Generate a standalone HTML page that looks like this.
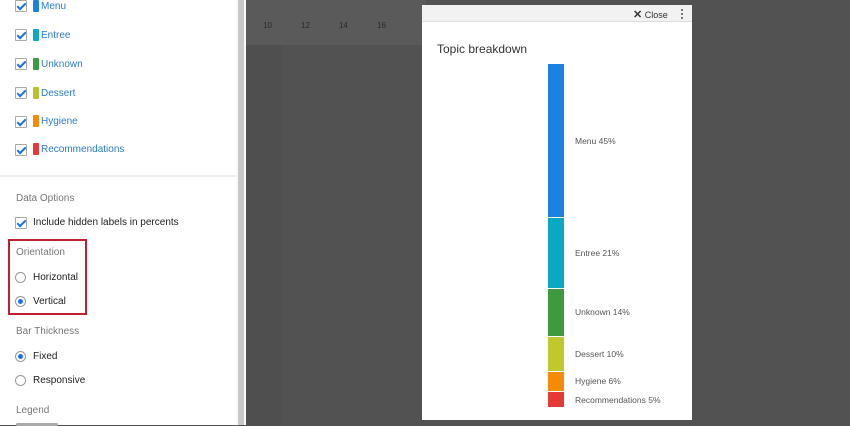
<!DOCTYPE html>
<html><head><style>
*{margin:0;padding:0;box-sizing:border-box}
body{width:850px;height:425px;overflow:hidden;position:relative;font-family:"Liberation Sans",sans-serif;background:#525252}
.panel{position:absolute;left:0;top:0;width:236px;height:425px;background:#fff}
.sb{position:absolute;left:236px;top:0;width:10px;height:425px;background:#fafafa}
.sb i{position:absolute;left:2px;top:0;width:6px;height:425px;background:#c8c8c8}
.t{position:absolute;font-size:10px;color:#222}
.lab{position:absolute;font-size:10px;color:#2a7bd0}
.cb{position:absolute;width:12px;height:12px;border:1px solid #aaa;background:#fff;border-radius:1px}
.cb:after{content:"";position:absolute;left:3px;top:0px;width:3px;height:7px;border:solid #1a73e8;border-width:0 2px 2px 0;transform:rotate(45deg)}
.sw{position:absolute;width:6px;height:12px;border-radius:1px}
.h{position:absolute;font-size:10px;color:#777}
.rd{position:absolute;width:11px;height:11px;border:1px solid #999;border-radius:50%;background:#fff}
.rd.on:after{content:"";position:absolute;left:2px;top:2px;width:5px;height:5px;border-radius:50%;background:#1a73e8}
.modal{position:absolute;left:422px;top:5px;width:270px;height:415px;background:#fff}
.seg{position:absolute;left:126px;width:16px}
.bl{position:absolute;left:153px;font-size:8.5px;color:#555}
</style></head><body>
<div class="panel">
<div class="cb" style="left:15px;top:0px"></div><div class="sw" style="left:33px;top:0px;background:#1a82e0"></div><div class="lab" style="left:41px;top:1px">Menu</div>
<div class="cb" style="left:15px;top:29px"></div><div class="sw" style="left:33px;top:29px;background:#0aa8c2"></div><div class="lab" style="left:41px;top:30px">Entree</div>
<div class="cb" style="left:15px;top:58px"></div><div class="sw" style="left:33px;top:58px;background:#3e9a3e"></div><div class="lab" style="left:41px;top:59px">Unknown</div>
<div class="cb" style="left:15px;top:87px"></div><div class="sw" style="left:33px;top:87px;background:#b7c22a"></div><div class="lab" style="left:41px;top:88px">Dessert</div>
<div class="cb" style="left:15px;top:116px"></div><div class="sw" style="left:33px;top:115px;background:#f58a07"></div><div class="lab" style="left:41px;top:116px">Hygiene</div>
<div class="cb" style="left:15px;top:144px"></div><div class="sw" style="left:33px;top:143px;background:#e53935"></div><div class="lab" style="left:41px;top:144px">Recommendations</div>
<div style="position:absolute;left:0;top:175px;width:236px;height:2px;background:#eee"></div>
<div class="h" style="left:16px;top:193px">Data Options</div>
<div class="cb" style="left:15px;top:217px"></div><div class="t" style="left:33px;top:217px">Include hidden labels in percents</div>
<div style="position:absolute;left:8px;top:239px;width:79px;height:76px;border:2px solid #c0202e"></div>
<div class="h" style="left:16px;top:247px">Orientation</div>
<div class="rd" style="left:15px;top:272px"></div><div class="t" style="left:33px;top:272px">Horizontal</div>
<div class="rd on" style="left:15px;top:296px"></div><div class="t" style="left:33px;top:296px">Vertical</div>
<div class="h" style="left:16px;top:326px">Bar Thickness</div>
<div class="rd on" style="left:15px;top:351px"></div><div class="t" style="left:33px;top:351px">Fixed</div>
<div class="rd" style="left:15px;top:375px"></div><div class="t" style="left:33px;top:375px">Responsive</div>
<div class="h" style="left:16px;top:405px">Legend</div>
<div style="position:absolute;left:16px;top:423px;width:42px;height:3px;background:#aaa;border-radius:2px"></div>
</div>
<div class="sb"><i></i></div>
<div style="position:absolute;left:246px;top:0;width:180px;height:45px;background:#5a5a5a"></div>
<div style="position:absolute;left:246px;top:45px;width:36px;height:380px;background:#4f4f4f"></div>
<div style="position:absolute;left:263px;top:21px;font-size:8px;color:#2a2a2a">10</div>
<div style="position:absolute;left:301px;top:21px;font-size:8px;color:#2a2a2a">12</div>
<div style="position:absolute;left:339px;top:21px;font-size:8px;color:#2a2a2a">14</div>
<div style="position:absolute;left:377px;top:21px;font-size:8px;color:#2a2a2a">16</div>
<div class="modal">
<div style="position:absolute;left:0;top:0;width:270px;height:17px;background:#f2f2f2;border-bottom:1px solid #ddd"></div>
<div style="position:absolute;left:211px;top:3px;font-size:9px;color:#333"><b style="font-size:11px">✕</b> Close</div>
<div style="position:absolute;left:259px;top:4px;width:2px;height:10px;border-left:2px dotted #777"></div>
<div style="position:absolute;left:15px;top:37px;font-size:12px;color:#333">Topic breakdown</div>
<div class="seg" style="top:59px;height:153px;background:#1a82e0"></div>
<div class="seg" style="top:213px;height:70px;background:#0aa8c2"></div>
<div class="seg" style="top:284px;height:47px;background:#3e9a3e"></div>
<div class="seg" style="top:332px;height:34px;background:#c0c82e"></div>
<div class="seg" style="top:367px;height:19px;background:#f58a07"></div>
<div class="seg" style="top:387px;height:15px;background:#e53935"></div>
<div class="bl" style="top:131px">Menu 45%</div>
<div class="bl" style="top:243px">Entree 21%</div>
<div class="bl" style="top:302px">Unknown 14%</div>
<div class="bl" style="top:344px">Dessert 10%</div>
<div class="bl" style="top:371px">Hygiene 6%</div>
<div class="bl" style="top:390px">Recommendations 5%</div>
</div>
</body></html>
